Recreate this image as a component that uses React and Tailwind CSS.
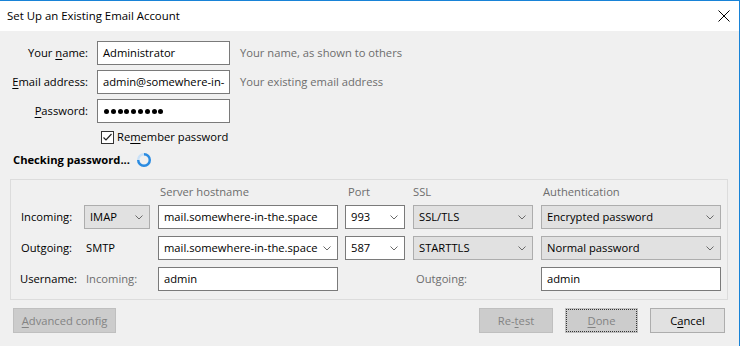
import React from "react";

const font = "font-['Open_Sans','Noto_Sans',sans-serif]";

function U({ children }) {
  return <span className="underline underline-offset-2">{children}</span>;
}

function Chevron() {
  return (
    <svg width="8" height="5" viewBox="0 0 8 5" className="shrink-0">
      <path d="M0.5 0.5 L4 4 L7.5 0.5" fill="none" stroke="#6a6a6a" strokeWidth="1" />
    </svg>
  );
}

function Field({ children, className = "" }) {
  return (
    <div className={`h-[24px] border border-[#7a7a7a] bg-white flex items-center pl-[5px] pr-[6px] overflow-hidden ${className}`}>
      {children}
    </div>
  );
}

function Select({ children, className = "" }) {
  return (
    <div className={`h-[24px] border border-[#adadad] bg-[#e1e1e1] flex items-center justify-between pl-[5px] pr-[6px] ${className}`}>
      <span>{children}</span>
      <Chevron />
    </div>
  );
}

function Combo({ children, className = "" }) {
  return (
    <Field className={`justify-between ${className}`}>
      <span className="whitespace-nowrap">{children}</span>
      <Chevron />
    </Field>
  );
}

function Spinner() {
  return (
    <svg width="16" height="16" viewBox="0 0 16 16">
      <circle cx="8" cy="8" r="5.8" fill="none" stroke="#c9e1f8" strokeWidth="2.4" />
      <path d="M8 2.2 A5.8 5.8 0 1 1 2.2 8" fill="none" stroke="#2b8be0" strokeWidth="2.4" />
    </svg>
  );
}

function Button({ children, variant = "normal", className = "" }) {
  const styles = {
    normal: "bg-[#e1e1e1] border border-[#adadad] text-black",
    disabled: "bg-[#cccccc] border border-[#bfbfbf] text-[#838383]",
  };
  return (
    <div className={`h-[25px] flex items-center justify-center ${styles[variant]} ${className}`}>
      {children}
    </div>
  );
}

export default function App() {
  return (
    <div className={`w-[741px] h-[346px] bg-white ${font} text-[11.2px] leading-[16px] text-black`}>
      <div className="w-[740px] h-[346px] border-t border-r border-[#1883d7] flex flex-col">
        {/* title bar */}
        <div className="h-[30px] bg-white flex items-center justify-between pl-[7px] pr-[9px] shrink-0">
          <span className="text-[11.4px]">Set Up an Existing Email Account</span>
          <svg width="12" height="12" viewBox="0 0 12 12">
            <path d="M0.5 0.5 L11.5 11.5 M11.5 0.5 L0.5 11.5" stroke="#000" strokeWidth="1" />
          </svg>
        </div>

        <div className="flex-1 bg-[#f0f0f0] pt-[10px] flex flex-col">
          {/* account fields */}
          <div className="flex flex-col gap-[5px]">
            <div className="flex items-center">
              <div className="w-[88px] text-right">Your <U>n</U>ame:</div>
              <Field className="ml-[9px] w-[133px]">Administrator</Field>
              <div className="ml-[10px] text-[#6d6d6d]">Your name, as shown to others</div>
            </div>
            <div className="flex items-center">
              <div className="w-[88px] text-right"><U>E</U>mail address:</div>
              <Field className="ml-[9px] w-[133px]">
                <span className="whitespace-nowrap">admin@somewhere-in-</span>
              </Field>
              <div className="ml-[10px] text-[#6d6d6d]">Your existing email address</div>
            </div>
            <div className="flex items-center">
              <div className="w-[88px] text-right"><U>P</U>assword:</div>
              <Field className="ml-[9px] w-[133px] gap-[1.8px] pl-[6px]">
                {Array.from({ length: 9 }).map((_, i) => (
                  <div key={i} className="w-[5px] h-[5px] rounded-full bg-black" />
                ))}
              </Field>
            </div>
          </div>

          <div className="flex items-center ml-[101px] mt-[7px] h-[14px]">
            <div className="w-[13px] h-[13px] border border-[#333] bg-white flex items-center justify-center">
              <svg width="11" height="11" viewBox="0 0 11 11">
                <path d="M1.5 5.5 L4 8 L9.5 2" fill="none" stroke="#222" strokeWidth="1.2" />
              </svg>
            </div>
            <span className="ml-[3px]">Re<U>m</U>ember password</span>
          </div>

          <div className="flex items-center ml-[13px] mt-[8px] h-[16px] gap-[6px]">
            <span className="font-bold">Checking password...</span>
            <Spinner />
          </div>

          {/* server settings group */}
          <div className="ml-[10px] mt-[11px] w-[718px] border border-[#dcdcdc] pl-[10px] pt-[6px] pb-[8px]">
            <div className="grid grid-cols-[63px_74px_187px_68px_128px_180px] grid-rows-[12px_24px_24px_24px] items-center gap-y-[7px]">
              <div />
              <div />
              <div className="pl-[2px] text-[#6d6d6d]">Server hostname</div>
              <div className="pl-[3px] text-[#6d6d6d]">Port</div>
              <div className="text-[#6d6d6d]">SSL</div>
              <div className="pl-[2px] text-[#6d6d6d]">Authentication</div>

              <div>Incoming:</div>
              <Select className="w-[66px]">IMAP</Select>
              <Field className="w-[180px]">mail.somewhere-in-the.space</Field>
              <Combo className="w-[60px]">993</Combo>
              <Select className="w-[120px]">SSL/TLS</Select>
              <Select className="w-[180px]">Encrypted password</Select>

              <div>Outgoing:</div>
              <div className="pl-[2px]">SMTP</div>
              <Combo className="w-[180px] pl-[4px] pr-[4px]">mail.somewhere-in-the.space</Combo>
              <Combo className="w-[60px]">587</Combo>
              <Select className="w-[120px]">STARTTLS</Select>
              <Select className="w-[180px]">Normal password</Select>

              <div className="-ml-[1px]">Username:</div>
              <div className="pl-[2px] text-[#6d6d6d]">Incoming:</div>
              <Field className="w-[180px]">admin</Field>
              <div />
              <div className="pl-[3px] text-[#6d6d6d]">Outgoing:</div>
              <Field className="w-[180px]">admin</Field>
            </div>
          </div>

          {/* buttons */}
          <div className="flex items-center mt-[8px] pl-[13px]">
            <Button variant="disabled" className="w-[103px]"><span><U>A</U>dvanced config</span></Button>
            <div className="flex-1" />
            <Button variant="disabled" className="w-[74px]"><span>Re-<U>t</U>est</span></Button>
            <Button variant="disabled" className="w-[73px] ml-[12px] outline-1 outline-dotted outline-[#333] -outline-offset-2">
              <span><U>D</U>one</span>
            </Button>
            <Button className="w-[75px] ml-[12px] mr-[14px]"><span>C<U>a</U>ncel</span></Button>
          </div>
        </div>
      </div>
    </div>
  );
}
